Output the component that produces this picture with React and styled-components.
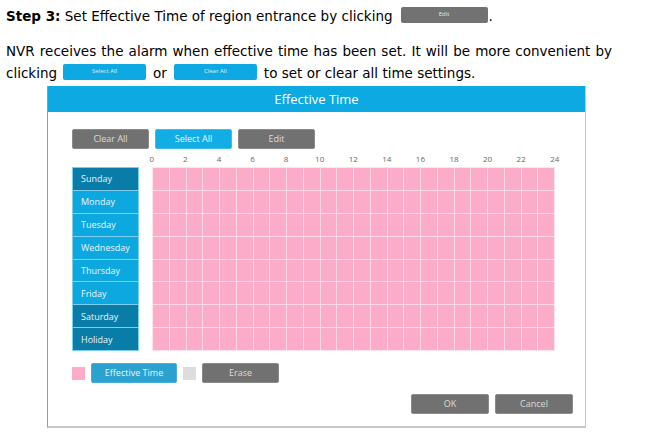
import React from "react";
import styled, { createGlobalStyle } from "styled-components";

const GlobalStyle = createGlobalStyle`
  html, body {
    margin: 0;
    padding: 0;
    background: #ffffff;
  }
  body {
    font-family: "DejaVu Sans", "Liberation Sans", sans-serif;
    color: #000000;
  }
`;

const Page = styled.div`
  width: 661px;
  height: 433px;
  overflow: hidden;
  padding: 5px 0 0 6px;
  box-sizing: border-box;
`;

const Para = styled.p`
  margin: 0;
  width: 606px;
  font-size: 13.5px;
  line-height: 22px;
  text-align: justify;
  text-align-last: left;
`;

const Gap = styled.div`
  height: 13px;
`;

const Bold = styled.b`
  font-weight: bold;
`;

const InlineBtn = styled.span`
  display: inline-block;
  vertical-align: middle;
  width: ${(p) => p.$w}px;
  height: 16px;
  margin: -4px ${(p) => p.$mr || 6}px 0 ${(p) => p.$ml || 6}px;
  background: ${(p) => (p.$blue ? "#0ea8e2" : "#727272")};
  border-radius: 2px;
  color: #e8e8e8;
  font-family: "Open Sans", sans-serif;
  font-size: 6px;
  line-height: 14px;
  text-align: center;
  text-align-last: center;
`;

const Dialog = styled.div`
  margin: 2px 0 0 41px;
  width: 539px;
  box-sizing: border-box;
  border-left: 1px solid #9a9a9a;
  border-right: 1px solid #c6c6c6;
  border-bottom: 2px solid #c8c8c8;
  background: #ffffff;
  font-family: "Open Sans", sans-serif;
`;

const Header = styled.div`
  height: 26px;
  background: #0ca9e2;
  color: #ffffff;
  font-size: 13px;
  line-height: 26px;
  text-align: center;
`;

const Body = styled.div`
  padding: 17px 0 12px 24px;
`;

const Toolbar = styled.div`
  display: flex;
  gap: 6px;
`;

const Button = styled.div`
  width: ${(p) => p.$w || 77}px;
  height: 20px;
  box-sizing: border-box;
  border-radius: 2px;
  border: 1px solid ${(p) => (p.$tone === "blue" ? "#3dbbe9" : p.$tone === "teal" ? "#4bb0d6" : "#8a8a8a")};
  background: ${(p) => (p.$tone === "blue" ? "#13ade6" : p.$tone === "teal" ? "#2aa1cf" : "#717171")};
  color: ${(p) => (p.$tone ? "#e6f6fc" : "#dcdcdc")};
  font-size: 9px;
  line-height: 18px;
  text-align: center;
`;

const Hours = styled.div`
  display: grid;
  grid-template-columns: repeat(13, 33.58px);
  margin: 1px 0 0 63px;
  height: 17px;
  font-size: 8px;
  line-height: 17px;
  color: #666666;
  text-align: center;
`;

const Schedule = styled.div`
  display: flex;
  gap: 13px;
`;

const Days = styled.div`
  width: 67px;
  display: grid;
  grid-template-rows: repeat(8, 1fr);
  gap: 1px;
  background: #7ccfee;
  border: 1px solid #7ccfee;
  box-sizing: border-box;
  height: 184px;
`;

const Day = styled.div`
  display: flex;
  align-items: center;
  background: ${(p) => (p.$dark ? "#0a7ca8" : "#0da8e0")};
  color: #e8f6fc;
  font-size: 9px;
  padding-left: 8px;
`;

const Grid = styled.div`
  width: 403px;
  height: 184px;
  display: grid;
  grid-template-columns: repeat(24, 1fr);
  grid-template-rows: repeat(8, 1fr);
  gap: 1px;
  background: #fdd9e6;
  border: 1px solid #fde3ec;
  box-sizing: border-box;
`;

const Cell = styled.div`
  background: #fcabc8;
`;

const Legend = styled.div`
  display: flex;
  align-items: center;
  gap: 6px;
  margin-top: 12px;
`;

const Swatch = styled.div`
  width: 13px;
  height: 13px;
  background: ${(p) => p.$c};
`;

const Footer = styled.div`
  display: flex;
  justify-content: flex-end;
  gap: 6px;
  margin: 11px 12px 0 0;
`;

const days = [
  ["Sunday", true],
  ["Monday", false],
  ["Tuesday", false],
  ["Wednesday", false],
  ["Thursday", false],
  ["Friday", false],
  ["Saturday", true],
  ["Holiday", true],
];

const hours = [0, 2, 4, 6, 8, 10, 12, 14, 16, 18, 20, 22, 24];

export default function App() {
  return (
    <Page>
      <GlobalStyle />
      <Para>
        <Bold>Step 3:</Bold> Set Effective Time of region entrance by clicking
        <InlineBtn $w={87} $ml={8} $mr={1}>Edit</InlineBtn>.
      </Para>
      <Gap />
      <Para>
        NVR receives the alarm when effective time has been set. It will be more convenient by clicking
        <InlineBtn $blue $w={83} $ml={6} $mr={7}>Select All</InlineBtn>or
        <InlineBtn $blue $w={83} $ml={7} $mr={7}>Clear All</InlineBtn>to set or clear all time settings.
      </Para>
      <Dialog>
        <Header>Effective Time</Header>
        <Body>
          <Toolbar>
            <Button>Clear All</Button>
            <Button $tone="blue">Select All</Button>
            <Button>Edit</Button>
          </Toolbar>
          <Hours>
            {hours.map((h) => (
              <span key={h}>{h}</span>
            ))}
          </Hours>
          <Schedule>
            <Days>
              {days.map(([name, dark]) => (
                <Day key={name} $dark={dark}>
                  {name}
                </Day>
              ))}
            </Days>
            <Grid>
              {Array.from({ length: 8 * 24 }, (_, i) => (
                <Cell key={i} />
              ))}
            </Grid>
          </Schedule>
          <Legend>
            <Swatch $c="#fcabc8" />
            <Button $tone="teal" $w={86}>Effective Time</Button>
            <Swatch $c="#dddddd" />
            <Button $w={77}>Erase</Button>
          </Legend>
          <Footer>
            <Button $w={78}>OK</Button>
            <Button $w={78}>Cancel</Button>
          </Footer>
        </Body>
      </Dialog>
    </Page>
  );
}
